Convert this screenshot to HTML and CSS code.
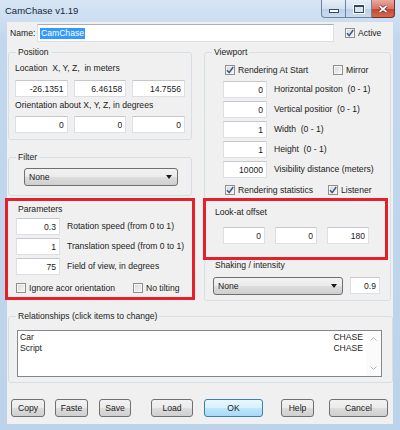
FILE: index.html
```html
<!DOCTYPE html>
<html lang="en">
<head>
    <meta charset="UTF-8">
    <title>CamChase v1.19</title>
    <link rel="stylesheet" href="styles.css">
</head>
<body>
    <div class="window">
        <div class="titlebar">
            <span class="title">CamChase v1.19</span>
            <div class="caption-buttons">
                <span class="caption-btn min"><span class="min-glyph"></span></span>
                <span class="caption-btn max"><span class="max-glyph"></span></span>
                <span class="caption-btn close">
                    <svg width="10" height="8" viewBox="0 0 10 8"><path d="M1.5 1 L8.5 7 M8.5 1 L1.5 7" stroke="#4a1d16" stroke-width="3"/><path d="M1.5 1 L8.5 7 M8.5 1 L1.5 7" stroke="#fff" stroke-width="1.8"/></svg>
                </span>
            </div>
        </div>

        <div class="client">
            <div class="name-row">
                <span class="name-label">Name:</span>
                <div class="textbox name-box"><span class="selected">CamChase</span></div>
                <label class="check active-check">
                    <span class="box"><svg width="8" height="8" viewBox="0 0 8 8"><path d="M1 4.2 L3.2 6.6 L7.2 1" stroke="#40598d" stroke-width="1.6" fill="none"/></svg></span>
                    Active
                </label>
            </div>

            <div class="columns">
                <div class="col-left">
                    <fieldset class="group position-group">
                        <legend>Position</legend>
                        <div class="caption first">Location&nbsp; X, Y, Z,&nbsp; in meters</div>
                        <div class="triple">
                            <input class="field" value="-26.1351">
                            <input class="field" value="6.46158">
                            <input class="field" value="14.7556">
                        </div>
                        <div class="caption">Orientation about X, Y, Z, in degrees</div>
                        <div class="triple second">
                            <input class="field" value="0">
                            <input class="field" value="0">
                            <input class="field" value="0">
                        </div>
                    </fieldset>

                    <fieldset class="group filter-group">
                        <legend>Filter</legend>
                        <div class="combo filter-combo"><span>None</span><span class="arrow"></span></div>
                    </fieldset>

                    <div class="highlight params-box">
                        <div class="box-title">Parameters</div>
                        <div class="param-row first">
                            <input class="field" value="0.3">
                            <span>Rotation speed (from 0 to 1)</span>
                        </div>
                        <div class="param-row">
                            <input class="field" value="1">
                            <span>Translation speed (from 0 to 1)</span>
                        </div>
                        <div class="param-row">
                            <input class="field" value="75">
                            <span>Field of view, in degrees</span>
                        </div>
                        <div class="check-row params-checks">
                            <label class="check wide-117"><span class="box"></span>Ignore acor orientation</label>
                            <label class="check"><span class="box"></span>No tilting</label>
                        </div>
                    </div>
                </div>

                <div class="col-right">
                    <fieldset class="group viewport-group">
                        <legend>Viewport</legend>
                        <div class="check-row vp-checks">
                            <label class="check wide-108">
                                <span class="box"><svg width="8" height="8" viewBox="0 0 8 8"><path d="M1 4.2 L3.2 6.6 L7.2 1" stroke="#40598d" stroke-width="1.6" fill="none"/></svg></span>
                                Rendering At Start
                            </label>
                            <label class="check"><span class="box"></span>Mirror</label>
                        </div>
                        <div class="vp-rows">
                            <div class="vp-row"><input class="field" value="0"><span>Horizontal positon&nbsp; (0 - 1)</span></div>
                            <div class="vp-row"><input class="field" value="0"><span>Vertical positior&nbsp; (0 - 1)</span></div>
                            <div class="vp-row"><input class="field" value="1"><span>Width&nbsp; (0 - 1)</span></div>
                            <div class="vp-row"><input class="field" value="1"><span>Height&nbsp; (0 - 1)</span></div>
                            <div class="vp-row"><input class="field" value="10000"><span>Visibility distance (meters)</span></div>
                        </div>
                        <div class="check-row vp-checks second">
                            <label class="check wide-103">
                                <span class="box"><svg width="8" height="8" viewBox="0 0 8 8"><path d="M1 4.2 L3.2 6.6 L7.2 1" stroke="#40598d" stroke-width="1.6" fill="none"/></svg></span>
                                Rendering statistics
                            </label>
                            <label class="check">
                                <span class="box"><svg width="8" height="8" viewBox="0 0 8 8"><path d="M1 4.2 L3.2 6.6 L7.2 1" stroke="#40598d" stroke-width="1.6" fill="none"/></svg></span>
                                Listener
                            </label>
                        </div>

                        <div class="highlight lookat-box">
                            <div class="box-title">Look-at offset</div>
                            <div class="triple lookat">
                                <input class="field" value="0">
                                <input class="field" value="0">
                                <input class="field" value="180">
                            </div>
                        </div>

                        <div class="shake-title">Shaking / intensity</div>
                        <div class="shake-row">
                            <div class="combo shake-combo"><span>None</span><span class="arrow"></span></div>
                            <input class="field shake-field" value="0.9">
                        </div>
                    </fieldset>
                </div>
            </div>

            <fieldset class="group relations-group">
                <legend>Relationships (click items to change)</legend>
                <div class="listbox">
                    <div class="list-items">
                        <div class="list-item"><span>Car</span><span>CHASE</span></div>
                        <div class="list-item"><span>Script</span><span>CHASE</span></div>
                    </div>
                    <div class="scrollbar">
                        <svg width="7" height="4" viewBox="0 0 7 4"><path d="M0.5 3.5 L3.5 0.5 L6.5 3.5" stroke="#b4b4b4" fill="none"/></svg>
                        <svg width="7" height="4" viewBox="0 0 7 4"><path d="M0.5 0.5 L3.5 3.5 L6.5 0.5" stroke="#b4b4b4" fill="none"/></svg>
                    </div>
                </div>
            </fieldset>

            <div class="button-row">
                <button class="btn btn-copy">Copy</button>
                <button class="btn btn-paste">Faste</button>
                <button class="btn btn-save">Save</button>
                <button class="btn btn-load">Load</button>
                <button class="btn btn-ok">OK</button>
                <button class="btn btn-help">Help</button>
                <button class="btn btn-cancel">Cancel</button>
            </div>
        </div>
    </div>
</body>
</html>
```

FILE: styles.css
```css
:root {
    --client-bg: #f0f0f0;
    --group-line: #d5dfe5;
    --field-line: #dcdfe6;
    --mark-red: #e3212a;
    --btn-line: #707070;
    --text: #1b1b1b;
}

* {
    box-sizing: border-box;
}

body {
    margin: 0;
    font-family: 'Liberation Sans', Arial, sans-serif;
    font-size: 8.6px;
    line-height: 11px;
    color: var(--text);
    background: #fff;
}

.window {
    width: 400px;
    height: 430px;
    display: flex;
    flex-direction: column;
    padding: 0 7px 6px 7px;
    background: linear-gradient(#d6e5f4, #c2d7ed 40px, #bcd3ea);
}

/* title bar */
.titlebar {
    height: 22px;
    margin: 0 -2px;
    display: flex;
    justify-content: space-between;
    align-items: flex-start;
}

.title {
    padding: 5px 0 0 0;
    font-size: 9.5px;
    color: #17263a;
}

.caption-buttons {
    display: flex;
}

.caption-btn {
    height: 18px;
    display: flex;
    align-items: center;
    justify-content: center;
    border: 1px solid #6d849f;
    border-top: none;
    background: linear-gradient(#e6eef8, #d2e0f0 50%, #bccfe6 51%, #cadbee);
}

.caption-btn.min {
    width: 25px;
    border-radius: 0 0 0 4px;
}

.caption-btn.max {
    width: 26px;
    border-left: none;
}

.caption-btn.close {
    width: 23px;
    border-left: none;
    border-color: #6e3028;
    border-radius: 0 0 4px 0;
    background: linear-gradient(#eaa99d, #d87564 50%, #c4432f 51%, #d66a53);
}

.min-glyph {
    width: 10px;
    height: 4px;
    margin-top: 5px;
    background: #fff;
    border: 1px solid #38485e;
}

.max-glyph {
    width: 10px;
    height: 8px;
    border: 1px solid #38485e;
    border-top-width: 2px;
    background: #dbe6f3;
    box-shadow: 0 0 0 1px #fff;
}

/* client area */
.client {
    flex: 1;
    padding: 2px 0 0 1px;
    background: var(--client-bg);
}

.name-row {
    display: flex;
    align-items: center;
    height: 18px;
}

.name-label {
    width: 27px;
    margin-left: 2px;
}

.textbox {
    height: 18px;
    background: #fff;
    border: 1px solid var(--field-line);
    border-top-color: #abadb3;
    display: flex;
    align-items: center;
    padding-left: 2px;
}

.name-box {
    width: 297px;
}

.selected {
    background: #3399ff;
    color: #fff;
    padding: 0 1px;
}

.active-check {
    margin-left: 11px;
}

/* checkboxes */
.check {
    display: inline-flex;
    align-items: center;
    gap: 3px;
    white-space: nowrap;
}

.box {
    width: 10px;
    height: 10px;
    display: flex;
    align-items: center;
    justify-content: center;
    border: 1px solid #8e8f8f;
    background: linear-gradient(135deg, #d8d8d8, #f7f7f7);
    box-shadow: inset 0 0 0 1px #f4f4f4;
}

.check-row {
    display: flex;
    height: 12px;
    align-items: center;
}

.wide-117 { width: 117px; }
.wide-108 { width: 108px; }
.wide-103 { width: 103px; }

/* group boxes - padding stays 0 so every legend sits at the same spot */
.group {
    margin: 0;
    padding: 0;
    min-width: 0;
    border: 1px solid var(--group-line);
    border-radius: 3px;
}

.group legend {
    margin-left: 7px;
    padding: 0 2px;
    line-height: 11px;
}

.columns {
    display: flex;
    gap: 12px;
    margin-top: 5px;
}

.col-left {
    width: 184px;
    display: flex;
    flex-direction: column;
}

.col-right {
    width: 187px;
}

.field {
    height: 17px;
    width: 100%;
    margin: 0;
    padding: 0 3px;
    font: inherit;
    text-align: right;
    color: var(--text);
    background: #fff;
    border: 1px solid var(--field-line);
    border-top-color: #c5c8cf;
    outline: none;
}

.triple {
    display: grid;
    grid-template-columns: repeat(3, 1fr);
    gap: 6px;
    margin: 6px 6px 0 6px;
}

.triple.second {
    margin-top: 5px;
}

.position-group {
    height: 93px;
}

.caption {
    margin: 3px 0 0 6px;
}

.caption.first {
    margin-top: 5px;
}

.filter-group {
    height: 44px;
    margin-top: 12px;
}

.combo {
    height: 18px;
    display: flex;
    align-items: center;
    justify-content: space-between;
    padding: 0 5px 0 4px;
    border: 1px solid var(--btn-line);
    border-radius: 3px;
    background: linear-gradient(#f2f2f2, #ebebeb 50%, #dddddd 51%, #cfcfcf);
}

.filter-combo {
    margin: 5px 13px 0 15px;
}

.arrow {
    width: 0;
    height: 0;
    border-left: 3.5px solid transparent;
    border-right: 3.5px solid transparent;
    border-top: 4px solid #1a1a1a;
}

/* red marks */
.highlight {
    border: 3px solid var(--mark-red);
}

.params-box {
    height: 102px;
    margin: 2px -3px 0 -3px;
}

.box-title {
    margin-top: 3px;
    padding-left: 10px;
}

.param-row {
    display: flex;
    align-items: center;
    margin: 3px 0 0 8px;
}

.param-row .field {
    width: 44px;
    margin-right: 7px;
}

.params-checks {
    margin: 7px 0 0 8px;
}

/* viewport */
.viewport-group {
    height: 254px;
}

.vp-checks {
    margin: 6px 0 0 20px;
}

.vp-checks.second {
    margin-top: 6px;
}

.vp-rows {
    display: flex;
    flex-direction: column;
    gap: 3px;
    margin: 5px 0 0 18px;
}

.vp-row {
    display: flex;
    align-items: center;
}

.vp-row .field {
    width: 44px;
    margin-right: 7px;
}

.lookat-box {
    width: 185px;
    height: 62px;
    margin: 2px 0 0 -2px;
}

.lookat-box .box-title {
    margin-top: 6px;
    padding-left: 9px;
}

.triple.lookat {
    grid-template-columns: repeat(3, 42px);
    gap: 10px;
    margin: 9px 0 0 17px;
}

.shake-title {
    margin-left: 10px;
}

.shake-row {
    display: flex;
    align-items: flex-start;
    margin: 6px 0 0 8px;
}

.shake-combo {
    width: 130px;
}

.shake-field {
    width: 30px;
    margin-left: 7px;
}

/* relationships */
.relations-group {
    height: 72px;
    margin-top: 10px;
}

.listbox {
    height: 47px;
    margin: 8px 10px 0 8px;
    display: flex;
    background: #fff;
    border: 1px solid #828790;
}

.list-items {
    flex: 1;
    padding: 1px 3px 0 2px;
}

.list-item {
    display: flex;
    justify-content: space-between;
}

.scrollbar {
    width: 15px;
    display: flex;
    flex-direction: column;
    justify-content: space-between;
    align-items: center;
    padding: 6px 0 6px 0;
    background: #fbfbfb;
}

/* buttons */
.button-row {
    display: flex;
    margin-top: 16px;
}

.btn {
    height: 18px;
    padding: 0;
    font: inherit;
    color: var(--text);
    border: 1px solid var(--btn-line);
    border-radius: 3px;
    background: linear-gradient(#f2f2f2, #ebebeb 50%, #dddddd 51%, #cfcfcf);
}

.btn-copy { width: 34px; margin-left: 3px; }
.btn-paste { width: 33px; margin-left: 10px; }
.btn-save { width: 32px; margin-left: 11px; }
.btn-load { width: 42px; margin-left: 20px; }
.btn-ok { width: 59px; margin-left: 11px; }
.btn-help { width: 33px; margin-left: 18px; }
.btn-cancel { width: 59px; margin-left: 15px; }

.btn-ok {
    border-color: #3c7fb1;
    background: linear-gradient(#eaf6fd, #d9f0fc 50%, #bee6fd 51%, #a7d9f5);
}
```
